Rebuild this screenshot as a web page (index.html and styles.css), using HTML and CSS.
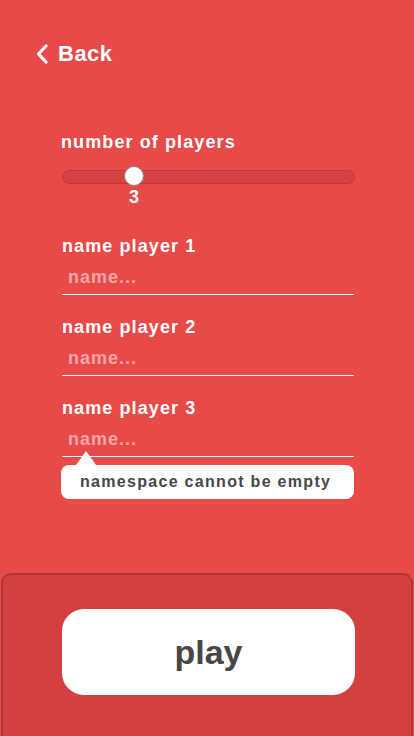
FILE: index.html
```html
<!DOCTYPE html>
<html>
<head>
<meta charset="utf-8">
<link rel="stylesheet" href="styles.css">
</head>
<body>
<div class="screen">
  <header class="top">
    <a class="back">
      <svg class="chev" width="14" height="22" viewBox="0 0 14 22"><path d="M11 3 L3.5 11 L11 19" fill="none" stroke="#fff" stroke-width="3.2" stroke-linecap="round" stroke-linejoin="round"/></svg>
      <span>Back</span>
    </a>
  </header>
  <main class="form">
    <section class="players">
      <div class="label">number of players</div>
      <div class="slider">
        <div class="track"></div>
        <div class="thumb"></div>
      </div>
      <div class="value">3</div>
    </section>
    <section class="field">
      <div class="label">name player 1</div>
      <div class="input">name...</div>
    </section>
    <section class="field">
      <div class="label">name player 2</div>
      <div class="input">name...</div>
    </section>
    <section class="field last">
      <div class="label">name player 3</div>
      <div class="input">name...</div>
      <div class="tip">namespace cannot be empty</div>
    </section>
  </main>
  <footer class="bottom">
    <button class="play">play</button>
  </footer>
</div>
</body>
</html>
```
FILE: styles.css
```css
html, body { margin: 0; padding: 0; }
body {
  background: #e84a49;
  font-family: "Liberation Sans", Arial, sans-serif;
  font-weight: bold;
  color: #fff;
  width: 414px;
  height: 736px;
  overflow: hidden;
}
.screen { display: flex; flex-direction: column; height: 736px; }
.top { padding: 41px 0 0 35px; height: 26px; }
.back { display: flex; align-items: center; gap: 9px; font-size: 22px; line-height: 26px; letter-spacing: 0.5px; }
.chev { display: block; margin-top: -1px; }
.form { padding: 0 60px 0 62px; margin-top: 65px; }
.label { font-size: 18px; line-height: 20px; letter-spacing: 1.1px; }
.players .label { margin-left: -1px; }
.slider { position: relative; height: 14px; margin-top: 18px; }
.track {
  height: 12px; border-radius: 7px;
  background: #d44242; border: 1px solid #c03939;
  margin-right: -1px;
}
.thumb {
  position: absolute; left: 62px; top: -4px;
  width: 20px; height: 20px; border-radius: 50%;
  background: #fff; border: 1px solid #8a8a8a; box-sizing: border-box;
}
.value { width: 20px; margin-left: 62px; text-align: center; font-size: 18px; line-height: 20px; margin-top: 3px; }
.input {
  color: #f7a6a6; font-size: 18px; line-height: 20px; letter-spacing: 1px;
  padding: 11px 0 7px 6px;
  border-bottom: 1px solid #fff;
}
.players + .field { margin-top: 29px; }
.field + .field { margin-top: 22px; }
.tip {
  position: relative;
  margin-top: 8px; margin-left: -1px;
  background: #fff; color: #474747;
  border-radius: 8px; height: 34px;
  font-size: 16px; line-height: 34px; letter-spacing: 1.3px;
  padding-left: 19px;
}
.tip::before {
  content: ""; position: absolute; left: 15px; top: -14px;
  border-left: 10px solid transparent; border-right: 10px solid transparent;
  border-bottom: 14px solid #fff;
}
.bottom {
  margin-top: auto;
  box-sizing: border-box;
  height: 163px;
  background: #d3403f;
  border: 2px solid #b03535; border-bottom: none;
  border-radius: 10px 10px 0 0;
  margin-left: 1px; margin-right: 1px;
  padding: 34px 0 0 59px;
}
.play {
  display: block;
  width: 293px; height: 86px;
  background: #fff; border: none; border-radius: 22px;
  font-family: "Liberation Sans", Arial, sans-serif;
  font-weight: bold; font-size: 34px; color: #474747;
  padding: 0;
}
```
